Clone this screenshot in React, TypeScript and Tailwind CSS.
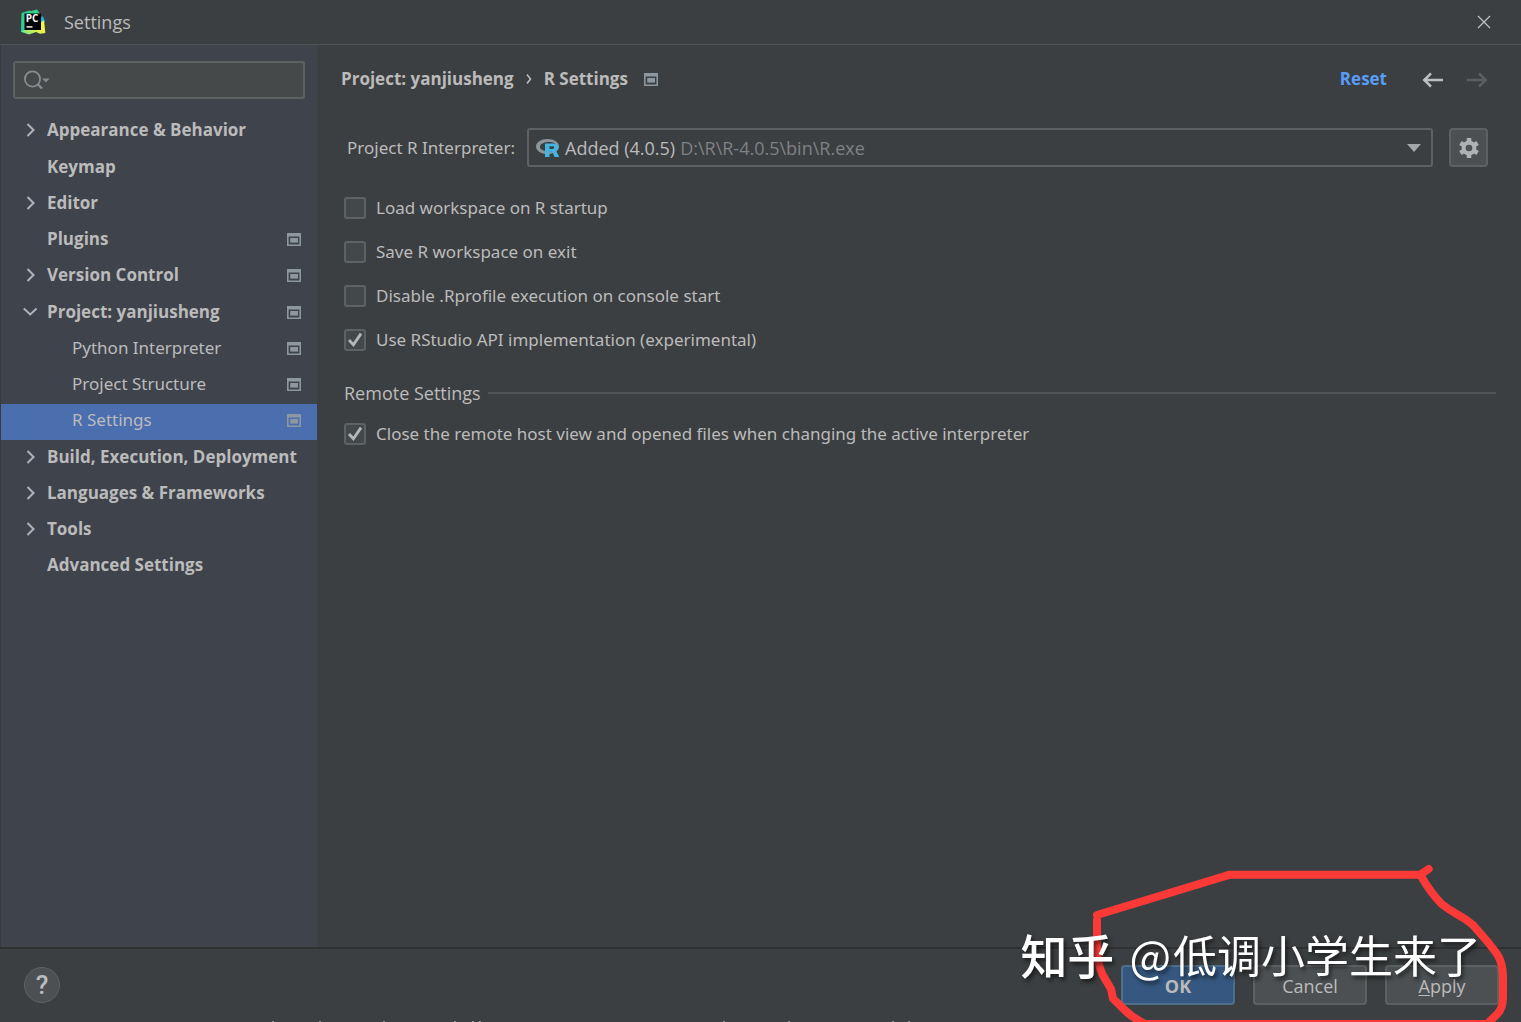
import React from "react";

const ProjectMark = ({ className = "" }: { className?: string }) => (
  <svg width="14" height="13" viewBox="0 0 14 13" className={className} aria-hidden="true">
    <path fill="#8c979f" fillRule="evenodd" d="M0 0h14v13H0zM1.6 3.4v8h10.8v-8z" />
    <rect x="3.2" y="5" width="7.8" height="4.6" fill="#8c979f" />
  </svg>
);

const Chevron = ({ open }: { open?: boolean }) => (
  <svg width="16" height="16" viewBox="0 0 16 16" fill="none" stroke="#afb4ba" strokeWidth="2" aria-hidden="true">
    {open ? <path d="M1.800 4.500l6.400 6 6.400-6" /> : <path d="M5.500 2l6 6-6 6" />}
  </svg>
);

type Item = { label: string; arrow?: "closed" | "open"; mark?: boolean; child?: boolean; selected?: boolean };

const groups: Item[][] = [
  [{ label: "Appearance & Behavior", arrow: "closed" }],
  [
    { label: "Keymap" },
    { label: "Editor", arrow: "closed" },
    { label: "Plugins", mark: true },
    { label: "Version Control", arrow: "closed", mark: true },
  ],
  [
    { label: "Project: yanjiusheng", arrow: "open", mark: true },
    { label: "Python Interpreter", mark: true, child: true },
    { label: "Project Structure", mark: true, child: true },
    { label: "R Settings", mark: true, child: true, selected: true },
  ],
  [
    { label: "Build, Execution, Deployment", arrow: "closed" },
    { label: "Languages & Frameworks", arrow: "closed" },
    { label: "Tools", arrow: "closed" },
    { label: "Advanced Settings" },
  ],
];

const TreeRow = ({ item }: { item: Item }) => (
  <button
    type="button"
    className={`flex h-9 w-full items-center pr-4 pb-1 text-left text-[17px] whitespace-nowrap ${
      item.selected ? "bg-[#4b6eaf]" : ""
    } ${item.child ? "pl-[71px] font-['Noto_Sans',sans-serif]" : "pl-[21px] font-bold"}`}
  >
    {!item.child && <span className="mr-[9px] flex w-4 shrink-0">{item.arrow && <Chevron open={item.arrow === "open"} />}</span>}
    <span className="flex-1">{item.label}</span>
    {item.mark && <ProjectMark />}
  </button>
);

const Check = ({ label, checked }: { label: string; checked?: boolean }) => (
  <label className="flex h-6 items-center gap-2.5 font-['Noto_Sans',sans-serif] text-[17px]">
    <span className="relative flex size-[22px] shrink-0">
      <input
        type="checkbox"
        defaultChecked={checked}
        className="peer size-[22px] appearance-none rounded-[3px] border-2 border-[#5e6265] bg-[#43494a]"
      />
      <svg
        viewBox="0 0 22 22"
        className="pointer-events-none absolute inset-0 hidden peer-checked:block"
        fill="none"
        stroke="#b4b8ba"
        strokeWidth="2.8"
        aria-hidden="true"
      >
        <path d="M5 11l4.4 4.8L17 4.6" />
      </svg>
    </span>
    {label}
  </label>
);

const AppLogo = () => (
  <svg width="26" height="26" viewBox="0 0 26 26" aria-hidden="true">
    <defs>
      <linearGradient id="green" x1="0" y1="0" x2="0.6" y2="1">
        <stop offset="0" stopColor="#21d789" />
        <stop offset="0.5" stopColor="#35cf8e" />
        <stop offset="1" stopColor="#07c3f2" />
      </linearGradient>
      <linearGradient id="lime" x1="0" y1="1" x2="1" y2="0">
        <stop offset="0" stopColor="#5fe38a" />
        <stop offset="0.5" stopColor="#e6f34c" />
        <stop offset="1" stopColor="#fcf84a" />
      </linearGradient>
    </defs>
    <path fill="url(#green)" d="M1.500 4l8-2.500 1.500.5 6-1.500 3.500 5-3.500 14.500-9 5-7-2z" />
    <path fill="#12b6e8" d="M19 8l4-.5 2 5-5 4z" />
    <path fill="url(#lime)" d="M1 22.500l7-3 12-6 4-2 .5 4 .8 8.500-5.300.8-4-1.800-7 2.500z" />
    <rect x="4.500" y="4.500" width="16.500" height="16.500" fill="#000" />
    <text x="5.800" y="13" fill="#fff" fontSize="10" fontWeight="700" fontFamily="Open Sans, sans-serif">
      PC
    </text>
    <rect x="6.500" y="17.200" width="6" height="1.400" fill="#fff" />
  </svg>
);

const RLogo = () => (
  <svg width="24" height="20" viewBox="0 0 24 20" className="shrink-0" aria-hidden="true">
    <path
      fill="#8b959b"
      fillRule="evenodd"
      d="M11.5 1C17.900 1 23 4.300 23 8.600s-5.100 7.600-11.500 7.600S0 12.900 0 8.600 5.100 1 11.500 1zm1.500 3C8 4 4 6.100 4 8.800s4 4.700 9 4.700 8-2 8-4.700S18 4 13 4z"
    />
    <path
      fill="#40b6e0"
      fillRule="evenodd"
      d="M9 5.500h8.600c3 0 4.800 1.400 4.800 3.900 0 1.700-.9 2.800-2.200 3.300l3 6.300h-4.600l-2.400-5.500h-2.700V19H9zm4.500 2.800v2.600h3.300c1 0 1.400-.4 1.400-1.300s-.4-1.300-1.400-1.300z"
    />
  </svg>
);

const Gear = () => (
  <svg width="22" height="22" viewBox="0 0 22 22" aria-hidden="true">
    <g fill="#afb1b3">
      {[0, 60, 120].map((a) => (
        <rect key={a} x="8.700" y="1" width="4.600" height="20" rx="0.500" transform={`rotate(${a} 11 11)`} />
      ))}
      <circle cx="11" cy="11" r="7.400" />
    </g>
    <circle cx="11" cy="11" r="3.300" fill="#4c5052" />
  </svg>
);

const Arrow = ({ color, back }: { color: string; back?: boolean }) => (
  <svg width="22" height="16" viewBox="0 0 22 16" fill="none" stroke={color} strokeWidth="2.600" aria-hidden="true">
    {back ? <path d="M21 8H2.500M9 1.300L2.300 8 9 14.700" /> : <path d="M1 8h18.500M13 1.300L19.700 8 13 14.700" />}
  </svg>
);

export default function App() {
  return (
    <div className="relative flex h-screen flex-col overflow-hidden bg-[#3c3f41] font-['Open_Sans','Noto_Sans',sans-serif] text-[18px] leading-6 text-[#bbbbbb]">
      <header className="flex h-[45px] shrink-0 items-center border-b border-[#515456] pr-[30px] pl-5">
        <AppLogo />
        <h1 className="ml-[18px] flex-1">Settings</h1>
        <button type="button" aria-label="Close">
          <svg width="14" height="14" viewBox="0 0 14 14" stroke="#bfc1c2" strokeWidth="1.200" aria-hidden="true">
            <path d="M1 1l12 12M13 1L1 13" />
          </svg>
        </button>
      </header>

      <div className="flex min-h-0 flex-1">
        <nav className="w-[317px] shrink-0 border-l border-[#373a3f] bg-[#3f434c] pt-4">
          <div className="mr-3 ml-3 flex h-[38px] items-center rounded-[3px] border-2 border-[#5e6162] bg-[#45494a] pl-2">
            <svg width="28" height="22" viewBox="0 0 28 22" fill="none" stroke="#888c8f" strokeWidth="1.800" aria-hidden="true">
              <circle cx="9.500" cy="10" r="7.600" />
              <path d="M15 15.500l4 4" strokeWidth="2.400" />
              <path d="M19 9.500h7.500l-3.750 4z" fill="#888c8f" stroke="none" />
            </svg>
            <input aria-label="Search settings" className="min-w-0 flex-1 bg-transparent outline-none" />
          </div>
          <div className="mt-[15px] flex flex-col gap-px">
            {groups.map((group, i) => (
              <div key={i}>
                {group.map((item) => (
                  <TreeRow key={item.label} item={item} />
                ))}
              </div>
            ))}
          </div>
        </nav>

        <main className="min-w-0 flex-1 pr-[25px] pl-6">
          <div className="mt-[22px] flex h-6 items-center pr-2 text-[17px] font-bold">
            <span>Project: yanjiusheng</span>
            <svg width="6" height="12" viewBox="0 0 6 12" fill="none" stroke="#bbbbbb" strokeWidth="1.600" className="mx-3" aria-hidden="true">
              <path d="M1 1.500L4.500 6 1 10.500" />
            </svg>
            <h2>R Settings</h2>
            <ProjectMark className="ml-4" />
            <a href="#reset" className="ml-auto text-[#589df6]">
              Reset
            </a>
            <button type="button" aria-label="Back" className="ml-[35px] pt-0.5">
              <Arrow color="#bcbebf" back />
            </button>
            <button type="button" aria-label="Forward" className="ml-[22px] pt-0.5" disabled>
              <Arrow color="#5b5e60" />
            </button>
          </div>

          <div className="mt-[37px] flex items-center pr-2 pl-1.5">
            <span className="w-[180px] shrink-0 font-['Noto_Sans',sans-serif] text-[17px]">Project R Interpreter:</span>
            <button
              type="button"
              aria-label="Project R Interpreter"
              className="flex h-[39px] min-w-0 flex-1 items-center rounded-[3px] border-2 border-[#5e6162] pr-2.5 pl-[7px]"
            >
              <RLogo />
              <span className="ml-[5px]">Added (4.0.5)</span>
              <span className="ml-[5px] flex-1 text-left text-[#7f8183]">D:\R\R-4.0.5\bin\R.exe</span>
              <svg width="14" height="8" viewBox="0 0 14 8" fill="#a4a6a8" aria-hidden="true">
                <path d="M0 0h14L7 8z" />
              </svg>
            </button>
            <button
              type="button"
              aria-label="Interpreter options"
              className="ml-4 flex size-[39px] items-center justify-center rounded-[4px] border-2 border-[#5e6162] bg-[#4c5052]"
            >
              <Gear />
            </button>
          </div>

          <div className="mt-[29px] ml-[3px] flex flex-col gap-5">
            <Check label="Load workspace on R startup" />
            <Check label="Save R workspace on exit" />
            <Check label="Disable .Rprofile execution on console start" />
            <Check label="Use RStudio API implementation (experimental)" checked />
          </div>

          <div className="mt-[29px] ml-[3px] flex items-center gap-[7px]">
            <h3>Remote Settings</h3>
            <span className="h-0.5 flex-1 bg-[#515456]" />
          </div>
          <div className="mt-[17px] ml-[3px]">
            <Check label="Close the remote host view and opened files when changing the active interpreter" checked />
          </div>
        </main>
      </div>

      <footer className="flex h-[75px] shrink-0 items-center border-t-2 border-[#2f3133] pr-[22px] pb-0.5 pl-6">
        <button
          type="button"
          aria-label="Help"
          className="mr-auto flex size-9 items-center justify-center rounded-full border border-[#5e6162] bg-[#4c5052] font-['Roboto',sans-serif] text-[26px] font-medium"
        >
          ?
        </button>
        <div className="flex gap-[18px]">
          <button type="button" className="h-10 w-[114px] rounded-[4px] border-2 border-[#4c708c] bg-[#365880] pt-0.5 font-bold">
            OK
          </button>
          <button type="button" className="h-10 w-[114px] rounded-[4px] border-2 border-[#5e6162] bg-[#4c5052] pt-0.5">
            Cancel
          </button>
          <button type="button" className="h-10 w-[114px] rounded-[4px] border-2 border-[#5e6162] bg-[#4c5052] pt-0.5">
            <span className="underline underline-offset-2">A</span>pply
          </button>
        </div>
      </footer>

      <svg
        width="521"
        height="172"
        viewBox="0 0 1563 516"
        className="pointer-events-none absolute right-0 bottom-0"
        fill="none"
        stroke="#fb3a38"
        strokeWidth="24"
        strokeLinecap="round"
        strokeLinejoin="round"
        aria-hidden="true"
      >
        <path d="M1286 57l-25 17H690L291 195M1263 78q30 52 62 84 20 16 45 30 30 16 50 34l45 52 27 35q17 28 17 68v62q0 30-16 48l-32 31H436q-38-18-60-40-20-20-37-36l-6-29-26-44q-18-40-16-92V210" />
      </svg>
      <p className="pointer-events-none absolute right-10 bottom-[35px] flex items-center font-['Noto_Sans_CJK_SC',sans-serif] text-[44px] leading-[66px] whitespace-nowrap text-white drop-shadow-[2px_3px_2px_rgba(0,0,0,0.6)]">
        <span className="mr-[15px] text-[47px] font-medium">知乎</span>
        <span className="mr-0.5">@</span>
        <span>低调小学生来了</span>
      </p>
      <svg width="660" height="1" viewBox="0 0 660 1" className="pointer-events-none absolute bottom-0 left-[260px]" fill="#8e9091" aria-hidden="true">
        {[12, 59, 123, 194, 212, 219, 463, 528, 632, 648].map((x) => (
          <rect key={x} x={x} y="0" width="2" height="1" />
        ))}
      </svg>
    </div>
  );
}
